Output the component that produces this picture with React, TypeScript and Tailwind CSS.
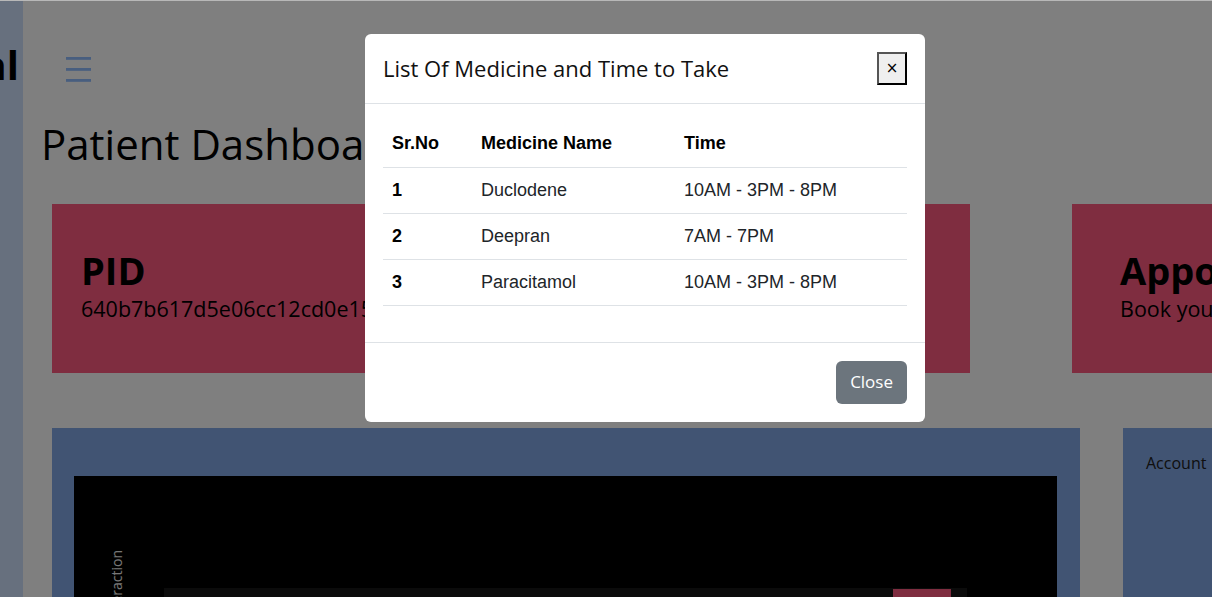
import React from "react";

/* =========================
   DATA
========================== */
const medicines = [
  { id: 1, name: "Duclodene", time: "10AM - 3PM - 8PM" },
  { id: 2, name: "Deepran", time: "7AM - 7PM" },
  { id: 3, name: "Paracitamol", time: "10AM - 3PM - 8PM" },
];

/* =========================
   PIECES
========================== */
const Hamburger = () => (
  <svg width="25" height="25" viewBox="0 0 25 25" className="block">
    <rect x="0" y="0" width="25" height="2.8" fill="#90bcff" />
    <rect x="0" y="11" width="25" height="2.8" fill="#90bcff" />
    <rect x="0" y="22" width="25" height="2.8" fill="#90bcff" />
  </svg>
);

const InfoCard = ({
  title,
  text,
  pad,
}: {
  title: string;
  text: string;
  pad: string;
}) => (
  <div
    className={`w-[408px] h-[169px] shrink-0 bg-[#fe5a80] flex flex-col justify-center pb-[4px] ${pad}`}
  >
    <div className="text-[38px] font-bold leading-[1.2] text-black whitespace-nowrap">
      {title}
    </div>
    <div className="text-[21.5px] leading-[1.5] text-black whitespace-nowrap">
      {text}
    </div>
  </div>
);

const Chart = () => (
  <svg width="983" height="200" className="block bg-black">
    <text
      transform="translate(48,74) rotate(-90)"
      textAnchor="end"
      fontSize="14"
      fill="#eeeeee"
      fontFamily="Open Sans, sans-serif"
    >
      Interaction
    </text>
    <rect x="90" y="112" width="803" height="88" fill="#161616" />
    <rect x="819" y="113" width="58" height="87" fill="#fe5a80" />
  </svg>
);

export default function App() {
  return (
    <div className="relative w-[1212px] h-[597px] overflow-hidden bg-white border-t border-[#b8b8b8] font-['Open_Sans',sans-serif] text-[#212529]">
      {/* Page */}
      <div className="flex h-full">
        <aside className="w-[23px] shrink-0 bg-[#cfe0fd] overflow-hidden flex justify-end">
          <div className="pt-[40px] pr-[4px] text-[40px] font-bold leading-[1.2] text-black whitespace-nowrap">
            Hospital
          </div>
        </aside>

        <main className="w-[1400px] shrink-0 flex flex-col">
          <div className="ml-[43px] mt-[56px]">
            <Hamburger />
          </div>

          <h1 className="ml-[18px] mt-[41px] text-[42px] leading-none text-black whitespace-nowrap">
            Patient Dashboard
          </h1>

          <div className="ml-[29px] mt-[39px] flex gap-[102px]">
            <InfoCard title="PID" text="640b7b617d5e06cc12cd0e15" pad="px-[29px]" />
            <InfoCard
              title="Prescription"
              text="View your medicines"
              pad="px-[29px]"
            />
            <InfoCard
              title="Appointment"
              text="Book your appointment"
              pad="px-[48px]"
            />
          </div>

          <div className="ml-[29px] mt-[55px] flex gap-[43px]">
            <div className="w-[1028px] shrink-0 bg-[#82a8e6] pl-[22px] pt-[48px] h-[260px]">
              <Chart />
            </div>
            <div className="w-[220px] shrink-0 bg-[#82a8e6] pl-[23px] pt-[23px] h-[260px] text-[16px] leading-[1.5] text-[#202020]">
              Account
            </div>
          </div>
        </main>
      </div>

      {/* Modal */}
      <div className="absolute inset-0 bg-black/50">
        <div className="absolute left-[365px] top-[33px] w-[560px] bg-white rounded-[6px] flex flex-col">
          <div className="h-[70px] px-[18px] flex items-center justify-between border-b border-[#dee2e6]">
            <h5 className="text-[22px] leading-[1.5] text-[#111]">
              List Of Medicine and Time to Take
            </h5>
            <button className="w-[30px] h-[33px] bg-[#efefef] border-2 border-t-[#555] border-l-[#555] border-r-black border-b-black text-[15px] leading-none text-black flex items-center justify-center font-['DejaVu_Sans',sans-serif]">
              ×
            </button>
          </div>

          <div className="px-[18px] pt-[17px] pb-[36px]">
            <table className="w-full border-collapse font-['Liberation_Sans',Arial,sans-serif] text-[18px] text-[#212529]">
              <thead>
                <tr className="h-[46px] border-b border-[#dee2e6] font-bold text-left text-black">
                  <th className="w-[89px] pl-[9px]">Sr.No</th>
                  <th className="w-[203px] pl-[9px]">Medicine Name</th>
                  <th className="pl-[9px]">Time</th>
                </tr>
              </thead>
              <tbody>
                {medicines.map((m) => (
                  <tr key={m.id} className="h-[46px] border-b border-[#dee2e6]">
                    <td className="pl-[9px] font-bold text-black">{m.id}</td>
                    <td className="pl-[9px]">{m.name}</td>
                    <td className="pl-[9px]">{m.time}</td>
                  </tr>
                ))}
              </tbody>
            </table>
          </div>

          <div className="border-t border-[#dee2e6] px-[18px] py-[18px] flex justify-end">
            <button className="h-[43px] px-[14px] bg-[#6c757d] text-white text-[17px] rounded-[6px]">
              Close
            </button>
          </div>
        </div>
      </div>
    </div>
  );
}
